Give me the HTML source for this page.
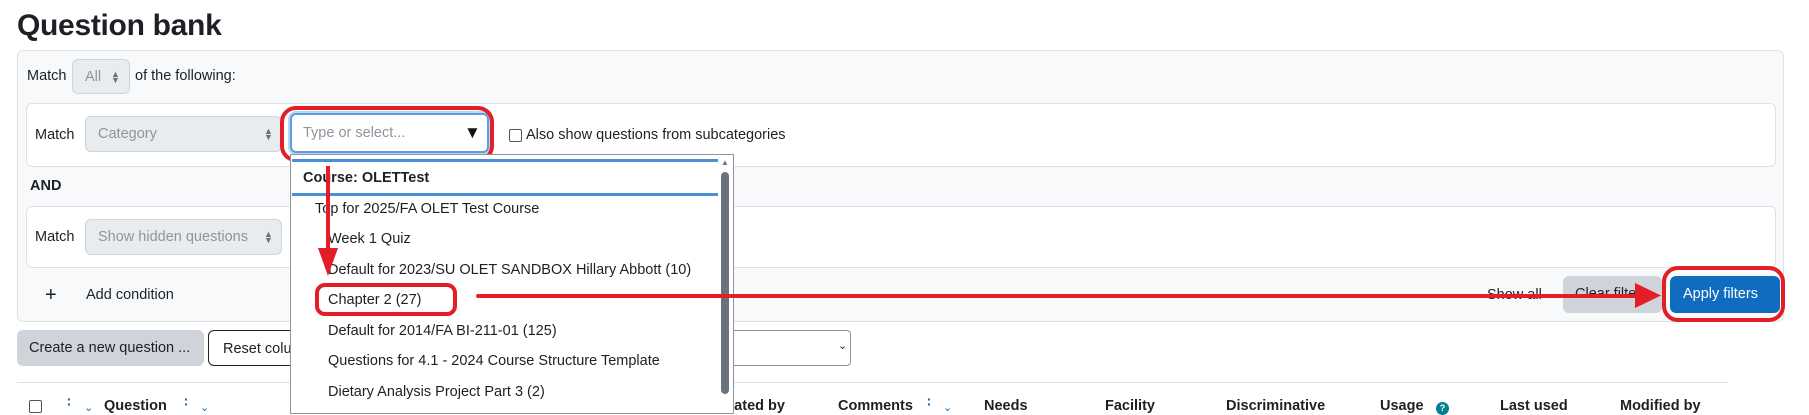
<!DOCTYPE html>
<html><head><meta charset="utf-8"><style>
*{box-sizing:border-box;margin:0;padding:0}
body{width:1809px;height:409px;overflow:hidden;background:#fff;font-family:"Liberation Sans",sans-serif;font-size:14.5px;color:#1d2125;position:relative}
.a{position:absolute;white-space:nowrap}
.sel{position:absolute;background:#e9ecef;border:1px solid #ced4da;border-radius:6px;color:#8f959e}
.arr{position:absolute;font-size:9px;color:#6a737b;line-height:6px}
.hd{position:absolute;top:398px;font-weight:bold;white-space:nowrap}
.dots{position:absolute;top:397px;color:#0f6cbf;font-weight:bold;font-size:14px;line-height:5px;width:4px}
.chev{position:absolute;top:401px;color:#0f6cbf;font-size:11px}
</style></head><body>
<div class="a" style="left:17px;top:9px;font-size:30px;font-weight:bold;letter-spacing:-0.3px">Question bank</div>

<div class="a" style="left:17px;top:50px;width:1767px;height:272px;background:#f8f9fa;border:1px solid #dee2e6;border-radius:6px"></div>
<div class="a" style="left:27px;top:68px">Match</div>
<div class="sel" style="left:72px;top:59px;width:58px;height:35px"><span class="a" style="left:12px;top:9px">All</span><span class="arr" style="left:38px;top:11px">▲<br>▼</span></div>
<div class="a" style="left:135px;top:68px">of the following:</div>

<div class="a" style="left:26px;top:103px;width:1750px;height:64px;background:#fff;border:1px solid #dee2e6;border-radius:6px"></div>
<div class="a" style="left:35px;top:127px">Match</div>
<div class="sel" style="left:85px;top:116px;width:197px;height:36px"><span class="a" style="left:12px;top:9px">Category</span><span class="arr" style="left:178px;top:11px">▲<br>▼</span></div>
<div class="a" style="left:290px;top:113px;width:199px;height:40px;border:2px solid #5b9ee0;border-radius:6px;background:#fff;box-shadow:0 0 0 2px #bcd6f2"><span class="a" style="left:11px;top:10px;color:#8f959e">Type or select...</span><span class="a" style="left:172px;top:8px;font-size:17px;color:#111">▼</span></div>
<div class="a" style="left:280px;top:106px;width:214px;height:56px;border:4px solid #e41e26;border-radius:16px"></div>
<div class="a" style="left:509px;top:129px;width:13px;height:13px;border:1px solid #555;border-radius:2px;background:#fff"></div>
<div class="a" style="left:526px;top:127px">Also show questions from subcategories</div>

<div class="a" style="left:30px;top:178px;font-weight:bold">AND</div>
<div class="a" style="left:26px;top:206px;width:1750px;height:62px;background:#fff;border:1px solid #dee2e6;border-radius:6px"></div>
<div class="a" style="left:35px;top:229px">Match</div>
<div class="sel" style="left:85px;top:219px;width:197px;height:36px"><span class="a" style="left:12px;top:9px">Show hidden questions</span><span class="arr" style="left:178px;top:11px">▲<br>▼</span></div>

<div class="a" style="left:45px;top:284px;font-size:20px">+</div>
<div class="a" style="left:86px;top:287px">Add condition</div>
<div class="a" style="left:1487px;top:287px">Show all</div>
<div class="a" style="left:1563px;top:276px;width:99px;height:37px;background:#ced4da;border-radius:6px;overflow:hidden"><span class="a" style="left:12px;top:10px">Clear filters</span></div>
<div class="a" style="left:1670px;top:276px;width:110px;height:37px;background:#0f6cbf;border-radius:6px;color:#fff"><span class="a" style="left:13px;top:10px">Apply filters</span></div>
<div class="a" style="left:1662px;top:266px;width:123px;height:56px;border:4px solid #e41e26;border-radius:16px"></div>

<div class="a" style="left:17px;top:330px;width:187px;height:36px;background:#ced4da;border-radius:6px"><span class="a" style="left:12px;top:10px">Create a new question ...</span></div>
<div class="a" style="left:208px;top:330px;width:120px;height:36px;border:1px solid #1d2125;border-radius:6px;overflow:hidden"><span class="a" style="left:14px;top:10px">Reset columns</span></div>
<div class="a" style="left:700px;top:330px;width:151px;height:36px;border:1px solid #8f959e;border-radius:4px"><span class="a" style="left:137px;top:8px;font-size:11px">⌄</span></div>
<div class="a" style="left:17px;top:382px;width:1711px;height:1px;background:#dee2e6"></div>

<div class="a" style="left:29px;top:400px;width:13px;height:13px;border:1px solid #555;border-radius:2px"></div>
<div class="dots" style="left:67px">·<br>·</div><div class="chev" style="left:84px">⌄</div>
<div class="hd" style="left:104px">Question</div>
<div class="dots" style="left:184px">·<br>·</div><div class="chev" style="left:200px">⌄</div>
<div class="hd" style="left:710px">Created by</div>
<div class="hd" style="left:838px">Comments</div>
<div class="dots" style="left:927px">·<br>·</div><div class="chev" style="left:943px">⌄</div>
<div class="hd" style="left:984px">Needs</div>
<div class="hd" style="left:1105px">Facility</div>
<div class="hd" style="left:1226px">Discriminative</div>
<div class="hd" style="left:1380px">Usage</div>
<div class="a" style="left:1436px;top:402px;width:13px;height:13px;border-radius:50%;background:#008196;color:#fff;font-size:9px;font-weight:bold;text-align:center;line-height:13px">?</div>
<div class="hd" style="left:1500px">Last used</div>
<div class="hd" style="left:1620px">Modified by</div>

<div class="a" style="left:290px;top:154px;width:444px;height:260px;background:#fff;border:1px solid #8f959e"></div>
<div class="a" style="left:292px;top:159px;width:426px;height:3px;background:#4a90d9"></div>
<div class="a" style="left:303px;top:170px;font-weight:bold">Course: OLETTest</div>
<div class="a" style="left:292px;top:193px;width:426px;height:3px;background:#4a90d9"></div>
<div class="a" style="left:718px;top:155px;width:15px;height:254px;background:#fff"></div>
<div class="a" style="left:721px;top:158px;font-size:8px;color:#6a737b">▲</div>
<div class="a" style="left:721px;top:172px;width:8px;height:222px;background:#6a737b;border-radius:4px"></div>
<div class="a" style="left:315px;top:201px">Top for 2025/FA OLET Test Course</div>
<div class="a" style="left:328px;top:231px">Week 1 Quiz</div>
<div class="a" style="left:328px;top:262px">Default for 2023/SU OLET SANDBOX Hillary Abbott (10)</div>
<div class="a" style="left:328px;top:292px">Chapter 2 (27)</div>
<div class="a" style="left:328px;top:323px">Default for 2014/FA BI-211-01 (125)</div>
<div class="a" style="left:328px;top:353px">Questions for 4.1 - 2024 Course Structure Template</div>
<div class="a" style="left:328px;top:384px">Dietary Analysis Project Part 3 (2)</div>
<div class="a" style="left:315px;top:283px;width:142px;height:33px;border:4px solid #e41e26;border-radius:10px"></div>

<svg class="a" style="left:0;top:0" width="1809" height="409">
<line x1="328" y1="166" x2="328" y2="250" stroke="#e41e26" stroke-width="4"/>
<polygon points="318,248 338,248 328,276" fill="#e41e26"/>
<line x1="478" y1="296" x2="1638" y2="296" stroke="#e41e26" stroke-width="4" stroke-linecap="round"/>
<polygon points="1635,283 1635,308 1661,295.5" fill="#e41e26"/>
</svg>
</body></html>
